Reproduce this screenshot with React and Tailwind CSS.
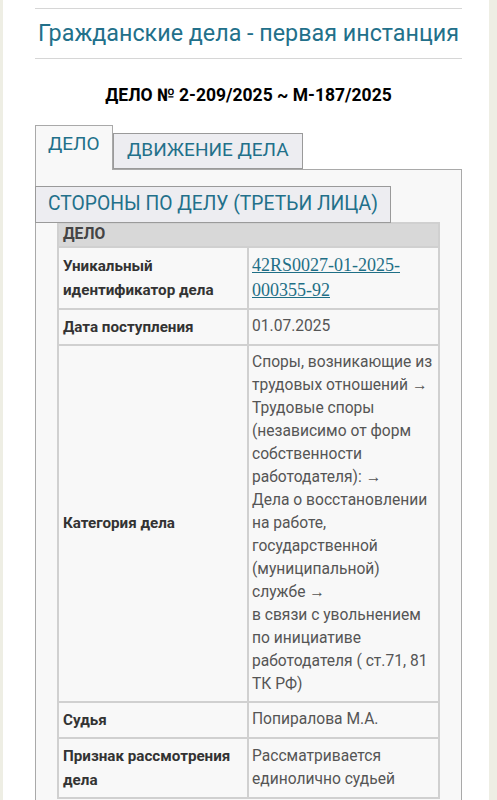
import React from 'react';

const rows = [
  {
    label: 'Уникальный идентификатор дела',
    value: (
      <a href="#" className="font-['Liberation_Serif',serif] text-[18px] text-[#1f6f86] underline leading-[24px]">
        42RS0027-01-2025-000355-92
      </a>
    ),
  },
  { label: 'Дата поступления', value: '01.07.2025' },
  {
    label: 'Категория дела',
    value: (
      <>
        Споры, возникающие из трудовых отношений →<br />
        Трудовые споры (независимо от форм собственности работодателя): →<br />
        Дела о восстановлении на работе, государственной (муниципальной) службе →<br />
        в связи с увольнением по инициативе работодателя ( ст.71, 81 ТК РФ)
      </>
    ),
  },
  { label: 'Судья', value: 'Попиралова М.А.' },
  { label: 'Признак рассмотрения дела', value: 'Рассматривается единолично судьей' },
];

export default function App() {
  return (
    <div className="min-h-[800px] bg-[#eeeee4] px-[3px] pr-[8px] font-['Roboto',sans-serif]">
      <div className="min-h-[800px] bg-white pt-[8px] pl-[32px] pr-[27px]">
        {/* Title */}
        <div className="border-t border-b border-[#d6d6d6] h-[51px] flex items-center justify-center">
          <h1 className="text-[23.3px] text-[#22708a] leading-none whitespace-nowrap">Гражданские дела - первая инстанция</h1>
        </div>

        <h2 className="mt-[28px] text-center text-[17.5px] font-bold text-black leading-none">
          ДЕЛО № 2-209/2025 ~ М-187/2025
        </h2>

        {/* Tabs */}
        <div className="mt-[20px] flex items-end">
          <div className="h-[45px] w-[78px] border border-b-0 border-[#a9a9a9] bg-[#f8f8f8] pt-[4px] pl-[12px] text-[19px] text-[#22708a] relative z-10 -mb-px">
            ДЕЛО
          </div>
          <div className="h-[36px] border border-[#9a9a9a] bg-[#ededf1] px-[13px] flex items-center text-[19px] text-[#22708a]">
            ДВИЖЕНИЕ ДЕЛА
          </div>
        </div>
        <div className="border border-[#a9a9a9] bg-[#f8f8f8] pt-[16px] pb-[20px]">
          <div className="-ml-px inline-flex h-[37px] items-center border border-[#9a9a9a] bg-[#ededf1] px-[12px] text-[19.3px] text-[#22708a] whitespace-nowrap">
            СТОРОНЫ ПО ДЕЛУ (ТРЕТЬИ ЛИЦА)
          </div>
          <table className="ml-[21px] w-[383px] border-collapse text-[15.6px] -mt-px">
            <thead>
              <tr>
                <th colSpan={2} className="bg-[#d8d8d8] border-2 border-[#d0d0d0] h-[24px] px-[4px] text-left font-bold text-[#444] leading-none">
                  ДЕЛО
                </th>
              </tr>
            </thead>
            <tbody>
              {rows.map((r, i) => (
                <tr key={i}>
                  <td className="w-[190px] border-2 border-[#d0d0d0] px-[4px] py-[5px] font-bold text-[15.2px] text-[#333] leading-[24px] align-middle">
                    {r.label}
                  </td>
                  <td className="border-2 border-[#d0d0d0] px-[3px] py-[5px] text-[#555] leading-[23px] align-middle">
                    {r.value}
                  </td>
                </tr>
              ))}
            </tbody>
          </table>
        </div>
      </div>
    </div>
  );
}
